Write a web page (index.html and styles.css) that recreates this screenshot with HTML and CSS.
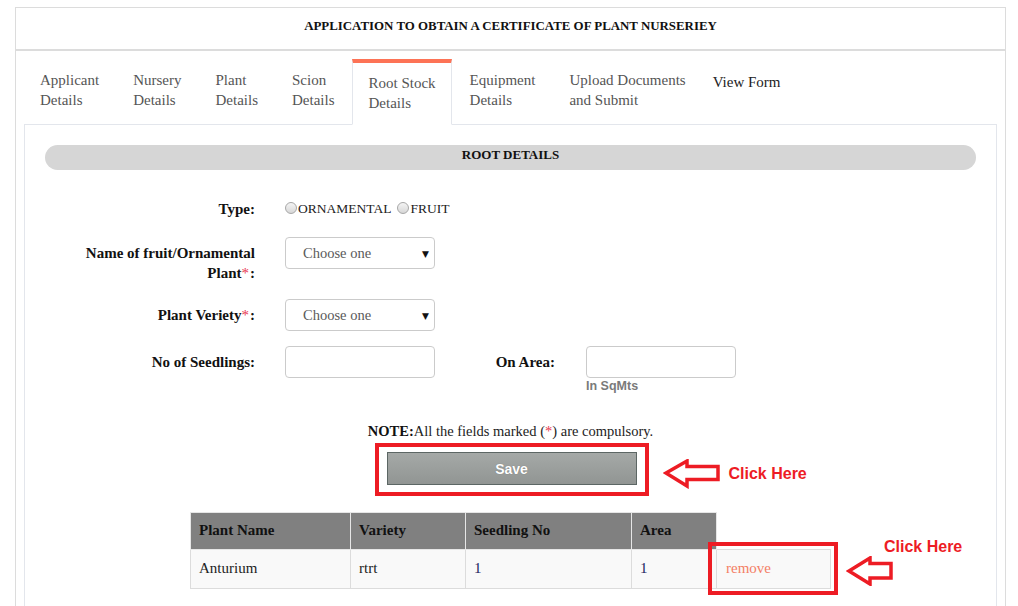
FILE: index.html
```html
<!DOCTYPE html>
<html>
<head>
<meta charset="utf-8">
<title>Plant Nursery Application</title>
<link rel="stylesheet" href="styles.css">
</head>
<body>
<div class="outer">
  <div class="title">APPLICATION TO OBTAIN A CERTIFICATE OF PLANT NURSERIEY</div>
  <div class="body">
    <ul class="tabs">
      <li class="tab">Applicant<br>Details</li>
      <li class="tab">Nursery<br>Details</li>
      <li class="tab">Plant<br>Details</li>
      <li class="tab">Scion<br>Details</li>
      <li class="tab active">Root Stock<br>Details</li>
      <li class="tab">Equipment<br>Details</li>
      <li class="tab">Upload Documents<br>and Submit</li>
      <li class="tab view">View Form</li>
    </ul>
    <div class="panel">
      <div class="bar">ROOT DETAILS</div>

      <div class="row row-type">
        <div class="label">Type:</div>
        <div class="radios">
          <label class="radio"><input type="radio" name="t">ORNAMENTAL</label>
          <label class="radio"><input type="radio" name="t">FRUIT</label>
        </div>
      </div>

      <div class="row row-name">
        <div class="label"><span>Name of fruit/Ornamental</span><br><span>Plant<span class="req">*</span>:</span></div>
        <div class="select">Choose one</div>
      </div>

      <div class="row row-variety">
        <div class="label">Plant Veriety<span class="req">*</span>:</div>
        <div class="select">Choose one</div>
      </div>

      <div class="row row-seed">
        <div class="label">No of Seedlings:</div>
        <div class="input"></div>
        <div class="label label-area">On Area:</div>
        <div class="field-col">
          <div class="input"></div>
          <div class="hint">In SqMts</div>
        </div>
      </div>

      <p class="note"><b>NOTE:</b>All the fields marked (<span class="req-n">*</span>) are compulsory.</p>

      <div class="save-row">
        <div class="mark">
          <button class="save">Save</button>
          <div class="annot annot-save">
            <svg class="arrow" width="58" height="30" viewBox="0 0 58 30"><polygon points="3,14 24,2 24,7.5 55,7.5 55,20.5 24,20.5 24,27" fill="#fff" stroke="#ed1c24" stroke-width="3.5" stroke-linejoin="miter"/></svg>
            <span class="click">Click Here</span>
          </div>
        </div>
      </div>

      <table class="grid">
        <thead>
          <tr>
            <th class="c1">Plant Name</th>
            <th class="c2">Variety</th>
            <th class="c3">Seedling No</th>
            <th class="c4">Area</th>
            <th class="blank"></th>
          </tr>
        </thead>
        <tbody>
          <tr>
            <td>Anturium</td>
            <td>rtrt</td>
            <td class="num">1</td>
            <td class="num">1</td>
            <td class="remove">remove
              <div class="mark-box"></div>
              <div class="annot annot-remove">
                <span class="click click-top">Click Here</span>
                <svg class="arrow" width="48" height="30" viewBox="0 0 48 30"><polygon points="3,15 24,2 24,7.5 45,7.5 45,22 24,22 24,28" fill="#fff" stroke="#ed1c24" stroke-width="3.5"/></svg>
              </div>
            </td>
          </tr>
        </tbody>
      </table>
    </div>
  </div>
</div>
</body>
</html>
```

FILE: styles.css
```css
* { box-sizing: border-box; }
html, body { margin: 0; padding: 0; background: #fff; }
body {
  font-family: "Liberation Serif", "DejaVu Serif", serif;
  font-size: 15px;
  line-height: 20px;
  color: #333;
  overflow: hidden;
}
.outer {
  margin: 7px 0 0 15px;
  width: 991px;
  border: 1px solid #dcdcdc;
  border-bottom: none;
}
.title {
  height: 43px;
  border-bottom: 2px solid #dcdcdc;
  display: flex;
  align-items: center;
  justify-content: center;
  font-weight: bold;
  font-size: 12.9px;
  color: #111;
  padding-bottom: 6px;
}
.body { padding: 0 8px; }
.tabs {
  list-style: none;
  margin: 0 0 -1px 0;
  padding: 8px 0 0 0;
  display: flex;
  align-items: flex-start;
}
.tab {
  padding: 10px 15px;
  border: 1px solid transparent;
  margin-right: 2px;
  color: #555;
  line-height: 20px;
}
.tab.view { color: #222; padding-top: 12px; padding-left: 8px; }
.tab.active {
  border-top: 4px solid #fd7356;
  border-left: 1px solid #e3e6ec;
  border-right: 1px solid #e3e6ec;
  border-bottom: 1px solid #fff;
  padding-bottom: 11px;
  background: #fff;
  position: relative;
  z-index: 1;
}
.panel {
  border: 1px solid #e3e6ec;
  border-bottom: none;
  padding: 20px 20px 30px 20px;
}
.bar {
  height: 25px;
  background: #d6d6d6;
  border-radius: 13px;
  text-align: center;
  font-weight: bold;
  font-size: 13px;
  color: #111;
  line-height: 18px;
  padding-top: 1px;
}
.row { display: flex; align-items: flex-start; }
.label {
  width: 210px;
  margin-right: 30px;
  text-align: right;
  font-weight: bold;
  color: #111;
  padding-top: 6px;
}
.row-type { margin-top: 29px; }
.row-type .label { padding-top: 0; }
.row-name { margin-top: 18px; }
.row-variety { margin-top: 16px; }
.row-seed { margin-top: 15px; }
.req { color: #e8364f; font-weight: normal; margin-right: 1px; }
.req-n { color: #e8364f; }
.radios { display: flex; gap: 6px; color: #222; font-size: 13.5px; }
.radio { display: flex; align-items: center; }
.radio input {
  appearance: none;
  -webkit-appearance: none;
  width: 12px;
  height: 12px;
  margin: 0 1px 0 0;
  border: 1px solid #a7a7a7;
  border-radius: 50%;
  background: linear-gradient(#f4f4f4, #d7d7d7);
  position: relative;
  top: -1px;
}
.select, .input {
  width: 150px;
  height: 32px;
  border: 1px solid #cbcbcb;
  border-radius: 4px;
  background: #fff;
}
.select {
  position: relative;
  padding: 5px 0 0 17px;
  color: #5a5a5a;
  font-size: 14.5px;
}
.select::after {
  content: "\25BC";
  position: absolute;
  right: 5px;
  top: 6px;
  font-size: 9px;
  color: #111;
  font-family: "DejaVu Sans", sans-serif;
}
.label-area { width: 120px; margin-right: 31px; }
.field-col { display: flex; flex-direction: column; }
.hint {
  font-family: "Liberation Sans", Arial, sans-serif;
  font-weight: bold;
  font-size: 12.5px;
  line-height: 14px;
  color: #7a7a7a;
  padding-top: 1px;
}
.note {
  margin: 28px 0 0 0;
  text-align: center;
  color: #222;
  font-size: 14.5px;
}
.note b { color: #111; }
.save-row { display: flex; justify-content: center; margin-top: 2px; padding-left: 2px; }
.mark {
  position: relative;
  border: 4px solid #ed1c24;
  padding: 5px 8px 7px 8px;
}
.save {
  display: block;
  width: 250px;
  height: 33px;
  border: 1px solid #5c6664;
  background: linear-gradient(#a5a9a7, #919593);
  color: #fff;
  font-family: "Liberation Sans", Arial, sans-serif;
  font-weight: bold;
  font-size: 14px;
  text-shadow: 0 0 1px rgba(0,0,0,0.3);
  padding: 0;
}
.annot { position: absolute; display: flex; align-items: center; }
.annot-save { left: calc(100% + 18px); top: 12px; }
.annot-save .arrow { margin-right: 8px; }
.click {
  font-family: "Liberation Sans", Arial, sans-serif;
  font-weight: bold;
  font-size: 16px;
  color: #ed1c24;
  white-space: nowrap;
}
.grid {
  border-collapse: collapse;
  margin: 16px 0 0 145px;
}
.grid th, .grid td {
  border: 1px solid #dcdcdc;
  text-align: left;
  padding: 7px 8px 9px 8px;
  line-height: 20px;
}
.grid th {
  background: #808080;
  color: #111;
  font-weight: bold;
  height: 37px;
  border-color: #e6e6e6;
}
.grid th.blank { background: #fff; border: none; }
.grid td {
  background: #f9f9f9;
  color: #222;
  height: 39px;
  padding-top: 8px;
  padding-bottom: 10px;
}
.grid td.num { color: #232360; }
.c1 { width: 160px; }
.c2 { width: 115px; }
.c3 { width: 166px; }
.c4 { width: 85px; }
.grid td.remove {
  width: 114px;
  color: #f47f66;
  padding-left: 9px;
  position: relative;
}
.mark-box {
  position: absolute;
  top: -8px;
  left: -9px;
  right: -8px;
  bottom: -7px;
  border: 4px solid #ed1c24;
}
.annot-remove {
  left: calc(100% + 16px);
  top: -13px;
  display: block;
  width: 90px;
  height: 50px;
}
.annot-remove .arrow { position: absolute; left: 0; top: 19px; }
.click-top { position: absolute; left: 38px; top: 0; }
```
